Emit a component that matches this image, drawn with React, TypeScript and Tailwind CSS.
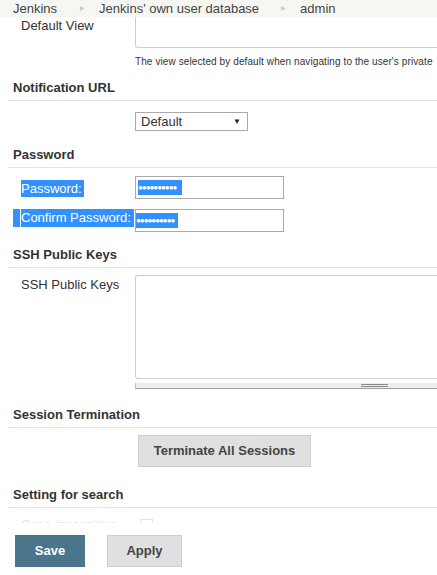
import React from 'react';

const SectionHeader: React.FC<{ title: string; className?: string }> = ({ title, className = '' }) => (
  <div className={`ml-[8px] pl-[5px] pb-[4px] border-b border-[#e3e3e3] text-[13px] leading-[16px] font-bold text-[#333] ${className}`}>
    {title}
  </div>
);

export default function App() {
  return (
    <div
      className="relative w-[437px] h-[575px] overflow-hidden bg-white text-[#333]"
      style={{ fontFamily: '"Liberation Sans", Arial, sans-serif' }}
    >
      {/* breadcrumb bar sits over the scrolled page */}
      <div className="absolute top-0 left-0 right-0 h-[17px] z-10 bg-[#f6f7f3] flex items-center text-[13px] leading-[15px] text-[#444] whitespace-nowrap">
        <span className="ml-[13px]">Jenkins</span>
        <span className="ml-[23px] mr-[14px] text-[6px] text-[#c8c8c8]">▶</span>
        <span>Jenkins' own user database</span>
        <span className="ml-[22px] mr-[14px] text-[6px] text-[#c8c8c8]">▶</span>
        <span>admin</span>
      </div>

      <div className="flex flex-col">
        {/* Default View */}
        <div className="flex mt-[16px]">
          <div className="w-[135px] shrink-0 pl-[21px] pt-[2px] text-[13px] leading-[15px]">Default View</div>
          <div className="flex-1 h-[32px] border border-[#cfcfcf] border-r-0 rounded-bl-[3px]" />
        </div>
        <div className="pl-[135px] mt-[8px] text-[10px] leading-[12px] whitespace-nowrap tracking-[0.1px]">
          The view selected by default when navigating to the user's private
        </div>

        <SectionHeader title="Notification URL" className="mt-[12px]" />
        <div className="pl-[135px] mt-[11px]">
          <div className="w-[113px] h-[19px] border border-[#a9a9a9] flex items-center justify-between pl-[5px] pr-[6px] text-[13px]">
            <span>Default</span>
            <span className="text-[8px] text-[#222]">▼</span>
          </div>
        </div>

        <SectionHeader title="Password" className="mt-[16px]" />
        <div className="flex mt-[8px]">
          <div className="w-[135px] shrink-0 pl-[21px]">
            <span className="inline-block bg-[#3390ff] text-white text-[13px] leading-[17px] pr-[2px]">Password:</span>
          </div>
          <div className="w-[149px] h-[23px] border border-[#a9a9a9] flex items-center pl-[2px]">
            <span className="bg-[#3390ff] text-white text-[8px] leading-[15px] w-[44px] overflow-hidden tracking-[-1px] font-bold">●●●●●●●●●●</span>
          </div>
        </div>
        <div className="flex mt-[9px]">
          <div className="w-[135px] shrink-0 pl-[13px] flex items-start">
            <span className="inline-block w-[7px] h-[18px] bg-[#3390ff]" />
            <span className="inline-block ml-[1px] bg-[#3390ff] text-white text-[13px] leading-[18px] pr-[1px] w-[113px]">Confirm Password:</span>
          </div>
          <div className="w-[149px] h-[23px] border border-[#a9a9a9] flex items-center">
            <span className="bg-[#3390ff] text-white text-[8px] leading-[15px] w-[42px] overflow-hidden tracking-[-1px] font-bold">●●●●●●●●●●</span>
          </div>
        </div>

        <SectionHeader title="SSH Public Keys" className="mt-[15px]" />
        <div className="flex mt-[7px]">
          <div className="w-[135px] shrink-0 pl-[21px] pt-[2px] text-[13px] leading-[15px]">SSH Public Keys</div>
          <div className="flex-1 flex flex-col">
            <div className="h-[104px] border border-[#cfcfcf] border-r-0 rounded-l-[3px]" />
            <div className="mt-[4px] h-[6px] bg-[#ececec] border-b border-[#a0a0a0] border-l border-l-[#c0c0c0] flex justify-end pr-[49px] pt-[1px]">
              <div className="w-[27px] h-[3px] border-t border-b border-[#8a8a8a]" />
            </div>
          </div>
        </div>

        <SectionHeader title="Session Termination" className="mt-[18px]" />
        <div className="pl-[138px] mt-[7px]">
          <div className="w-[173px] h-[32px] bg-[#e0e0e0] border border-[#cfcfcf] flex items-center justify-center text-[13px] font-bold text-[#444]">
            Terminate All Sessions
          </div>
        </div>

        <SectionHeader title="Setting for search" className="mt-[20px]" />
        <div className="flex items-center mt-[9px] text-[13px] leading-[16px] text-[#e4e4e4]">
          <span className="pl-[21px] w-[135px]">Case-insensitive</span>
          <span className="inline-block w-[13px] h-[13px] border border-[#e0e0e0] ml-[5px]" />
        </div>
      </div>

      {/* bottom action bar floats over content */}
      <div className="absolute left-0 right-0 bottom-0 h-[52px] bg-white flex items-start pt-[12px] pl-[15px] gap-[22px]">
        <div className="w-[70px] h-[32px] bg-[#4b758b] text-white text-[13px] font-bold flex items-center justify-center">
          Save
        </div>
        <div className="w-[75px] h-[32px] bg-[#e0e0e0] border border-[#cfcfcf] text-[#444] text-[13px] font-bold flex items-center justify-center">
          Apply
        </div>
      </div>
    </div>
  );
}
